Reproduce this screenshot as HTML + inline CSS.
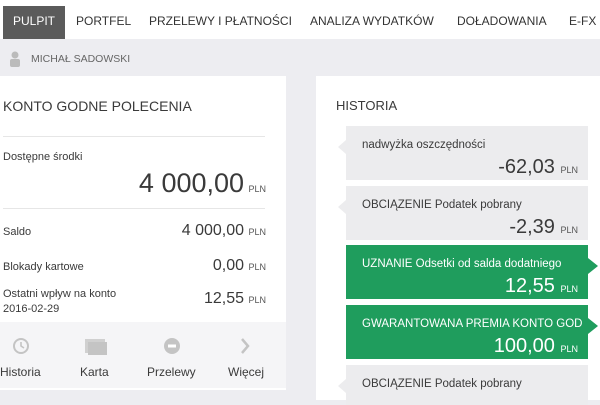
<!DOCTYPE html>
<html><head><meta charset="utf-8"><style>
*{margin:0;padding:0;box-sizing:border-box}
body{width:600px;height:400px;overflow:hidden;background:#ededf1;font-family:"Liberation Sans",sans-serif;color:#3a3a3a;position:relative}
.nav{position:absolute;left:0;top:0;width:600px;height:39px;background:#fff}
.nav span{position:absolute;top:14px;font-size:12px;color:#333}
.tab{position:absolute;left:3px;top:6px;width:62px;height:33px;background:#5b5b5b}
.abs{position:absolute;white-space:nowrap}
.card{position:absolute;background:#fff}
.pln{font-size:9px;color:#555}
.it{position:absolute;left:346px;width:242px;background:#ececee}
.it.g{background:#1f9d5d;color:#fff}
.it .t{position:absolute;left:16px;top:13px;font-size:11.5px;white-space:nowrap;width:220px;overflow:hidden}
.it .a{position:absolute;right:10px;top:30px;font-size:20px;white-space:nowrap}
.it.g .pln{color:#fff}
.nl{position:absolute;left:338px;border-right:8px solid #ececee;border-top:7px solid transparent;border-bottom:7px solid transparent}
</style></head><body>
<div class="nav">
<div class="tab"></div>
<span style="left:13px;color:#fff">PULPIT</span>
<span style="left:76px">PORTFEL</span>
<span style="left:149px">PRZELEWY I PŁATNOŚCI</span>
<span style="left:310px">ANALIZA WYDATKÓW</span>
<span style="left:457px">DOŁADOWANIA</span>
<span style="left:569px">E-FX</span>
</div>
<svg class="abs" style="left:9px;top:51px" width="12" height="16"><circle cx="6" cy="4" r="3.5" fill="#bbb"/><rect x="1" y="8" width="10" height="8" rx="2" fill="#bbb"/></svg>
<div class="abs" style="left:31px;top:53px;font-size:10.5px;color:#666">MICHAŁ SADOWSKI</div>

<div class="card" style="left:0;top:76px;width:286px;height:314px"></div>
<div class="abs" style="left:3px;top:98px;font-size:14px">KONTO GODNE POLECENIA</div>
<div class="abs" style="left:3px;top:136px;width:262px;height:1px;background:#e6e6e6"></div>
<div class="abs" style="left:3px;top:151px;font-size:11px">Dostępne środki</div>
<div class="abs" style="right:334px;top:168px"><span style="font-size:27px">4 000,00</span> <span class="pln">PLN</span></div>
<div class="abs" style="left:3px;top:208px;width:262px;height:1px;background:#e6e6e6"></div>
<div class="abs" style="left:3px;top:226px;font-size:11px">Saldo</div>
<div class="abs" style="right:334px;top:222px"><span style="font-size:16px">4 000,00</span> <span class="pln">PLN</span></div>
<div class="abs" style="left:3px;top:261px;font-size:11px">Blokady kartowe</div>
<div class="abs" style="right:334px;top:257px"><span style="font-size:16px">0,00</span> <span class="pln">PLN</span></div>
<div class="abs" style="left:3px;top:287px;font-size:11px;line-height:15px">Ostatni wpływ na konto<br>2016-02-29</div>
<div class="abs" style="right:334px;top:290px"><span style="font-size:16px">12,55</span> <span class="pln">PLN</span></div>
<div class="abs" style="left:0;top:322px;width:286px;height:66px;background:#f5f5f7"></div>
<svg class="abs" style="left:11px;top:337px" width="20" height="18"><circle cx="10" cy="9" r="7" fill="none" stroke="#c4c4c4" stroke-width="2"/><path d="M10 5v4l3 2" stroke="#c4c4c4" stroke-width="1.6" fill="none"/></svg>
<svg class="abs" style="left:84px;top:338px" width="24" height="18"><rect x="1" y="1" width="20" height="14" fill="#d0d0d0"/><rect x="4" y="4" width="19" height="13" fill="#c4c4c4"/></svg>
<svg class="abs" style="left:163px;top:337px" width="18" height="18"><circle cx="9" cy="9" r="8" fill="#c4c4c4"/><rect x="5" y="7.5" width="8" height="3" fill="#fff"/></svg>
<svg class="abs" style="left:239px;top:337px" width="12" height="18"><path d="M3 2l6 7-6 7" stroke="#c4c4c4" stroke-width="2.5" fill="none"/></svg>
<div class="abs" style="left:0;top:365px;font-size:12px">Historia</div>
<div class="abs" style="left:80px;top:365px;font-size:12px">Karta</div>
<div class="abs" style="left:147px;top:365px;font-size:12px">Przelewy</div>
<div class="abs" style="left:228px;top:365px;font-size:12px">Więcej</div>

<div class="card" style="left:316px;top:76px;width:284px;height:324px"></div>
<div class="abs" style="left:336px;top:98px;font-size:13px">HISTORIA</div>
<div class="nl" style="top:140px"></div>
<div class="nl" style="top:200px"></div>
<div class="nl" style="top:379px"></div>
<div class="it" style="top:126px;height:54px"><div class="t">nadwyżka oszczędności</div><div class="a">-62,03 <span class="pln">PLN</span></div></div>
<div class="it" style="top:186px;height:54px"><div class="t">OBCIĄŻENIE Podatek pobrany</div><div class="a">-2,39 <span class="pln">PLN</span></div></div>
<div class="it g" style="top:245px;height:54px"><div class="t">UZNANIE Odsetki od salda dodatniego</div><div class="a">12,55 <span class="pln">PLN</span></div></div>
<div class="it g" style="top:305px;height:54px"><div class="t">GWARANTOWANA PREMIA KONTO GODNE</div><div class="a">100,00 <span class="pln">PLN</span></div></div>
<div class="abs" style="left:588px;top:258px;border-left:10px solid #1f9d5d;border-top:8px solid transparent;border-bottom:8px solid transparent"></div>
<div class="abs" style="left:588px;top:318px;border-left:10px solid #1f9d5d;border-top:8px solid transparent;border-bottom:8px solid transparent"></div>
<div class="it" style="top:365px;height:40px"><div class="t">OBCIĄŻENIE Podatek pobrany</div></div>
</body></html>
